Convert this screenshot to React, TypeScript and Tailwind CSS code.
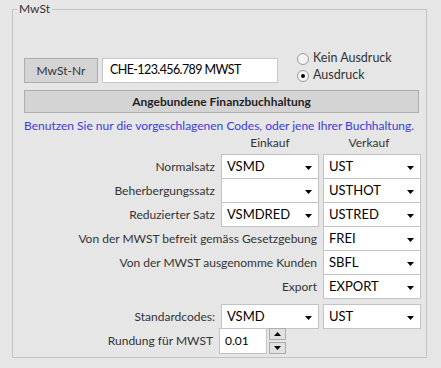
import React from "react";

const font = { fontFamily: 'Lato, "Noto Sans", sans-serif' };

function Arrow() {
  return (
    <svg width="8" height="4" viewBox="0 0 8 4" className="shrink-0">
      <path d="M0 0 H7 L3.5 4 Z" fill="#000" />
    </svg>
  );
}

function Combo({ value, w = "w-[98px]" }: { value: string; w?: string }) {
  return (
    <div
      className={`${w} h-[25px] bg-white border border-[#c3c3c3] flex items-center justify-between pl-[5px] pr-[5px] text-[13px] text-black`}
    >
      <span className="leading-none">{value}</span>
      <span className="mt-[2px]"><Arrow /></span>
    </div>
  );
}

function Radio({ checked, label }: { checked?: boolean; label: string }) {
  return (
    <div className="h-[17px] flex items-center gap-[4px]">
      <div className="w-[12px] h-[12px] rounded-full border border-[#9a9a9a] bg-[#f4f4f4] flex items-center justify-center">
        {checked && <div className="w-[4px] h-[4px] rounded-full bg-black" />}
      </div>
      <span className="text-[12.5px] text-[#333]">{label}</span>
    </div>
  );
}

const lbl = "flex-1 text-right pr-[6px] text-[12px] text-[#333] whitespace-nowrap";

export default function App() {
  const rows3 = [
    ["Normalsatz", "VSMD", "UST"],
    ["Beherbergungssatz", "", "USTHOT"],
    ["Reduzierter Satz", "VSMDRED", "USTRED"],
  ];
  const rowsV = [
    ["Von der MWST befreit gemäss Gesetzgebung", "FREI"],
    ["Von der MWST ausgenomme Kunden", "SBFL"],
    ["Export", "EXPORT"],
  ];
  return (
    <div className="w-[441px] h-[368px] bg-[#e6e6e6] pt-[9px] pl-[12px]" style={font}>
      <div className="relative w-[415px] h-[349px] border border-[#c4c4c4] pl-[11px] pt-[40px]">
        <span className="absolute left-[4px] -top-[9px] px-[2px] bg-[#e6e6e6] text-[12px] text-[#333] leading-[16px]">
          MwSt
        </span>
        {/* Row 1 */}
        <div className="flex items-start h-[34px]">
          <button className="mt-[8px] w-[74px] h-[25px] bg-[#d4d4d4] border border-[#adadad] text-[12px] text-[#333]">
            MwSt-Nr
          </button>
          <div className="mt-[8px] ml-[4px] w-[176px] h-[25px] bg-white border border-[#c8c8c8] flex items-center pl-[7px] text-[12.5px] tracking-[-0.6px] text-black">
            CHE-123.456.789 MWST
          </div>
          <div className="ml-[19px] flex flex-col">
            <Radio label="Kein Ausdruck" />
            <Radio checked label="Ausdruck" />
          </div>
        </div>
        {/* Row 2 */}
        <button className="mt-[6px] w-[395px] h-[23px] bg-[#d4d4d4] border border-[#adadad] text-[12px] font-bold text-[#222] leading-none">
          Angebundene Finanzbuchhaltung
        </button>
        <div className="mt-[5px] text-[12px] leading-[16px] text-[#3b3bdc] whitespace-nowrap">
          Benutzen Sie nur die vorgeschlagenen Codes, oder jene Ihrer Buchhaltung.
        </div>
        <div className="mt-[1px] flex text-[12px] leading-[16px] text-[#333] pr-[5px]">
          <div className="flex-1" />
          <div className="w-[98px] text-center">Einkauf</div>
          <div className="w-[98px] ml-[4px] pr-[6px] text-center">Verkauf</div>
        </div>
        <div className="mt-[3px] flex flex-col pr-[5px]">
          {rows3.map(([l, e, v], i) => (
            <div key={l} className={`flex items-center ${i === 0 ? "" : "-mt-px"}`}>
              <div className={lbl}>{l}</div>
              <Combo value={e} />
              <div className="ml-[4px]"><Combo value={v} /></div>
            </div>
          ))}
          {rowsV.map(([l, v]) => (
            <div key={l} className="flex items-center -mt-px">
              <div className={lbl}>{l}</div>
              <Combo value={v} />
            </div>
          ))}
          <div className="mt-[5px] flex items-center">
            <div className={lbl}>Standardcodes:</div>
            <Combo value="VSMD" />
            <div className="ml-[4px]"><Combo value="UST" /></div>
          </div>
          <div className="-mt-px flex items-center">
            <div className={lbl}>Rundung für MWST</div>
            <div className="w-[202px] flex items-start">
              <div className="w-[48px] h-[26px] bg-white border border-[#c3c3c3] flex items-center pl-[5px] text-[12px] text-black">
                0.01
              </div>
              <div className="ml-[2px] flex flex-col gap-[2px]">
                <div className="w-[17px] h-[12px] bg-[#e1e1e1] border border-[#adadad] flex items-center justify-center">
                  <svg width="7" height="4" viewBox="0 0 7 4"><path d="M0 4 H7 L3.5 0 Z" fill="#000" /></svg>
                </div>
                <div className="w-[17px] h-[12px] bg-[#e1e1e1] border border-[#adadad] flex items-center justify-center">
                  <svg width="7" height="4" viewBox="0 0 7 4"><path d="M0 0 H7 L3.5 4 Z" fill="#000" /></svg>
                </div>
              </div>
            </div>
          </div>
        </div>
      </div>
    </div>
  );
}
